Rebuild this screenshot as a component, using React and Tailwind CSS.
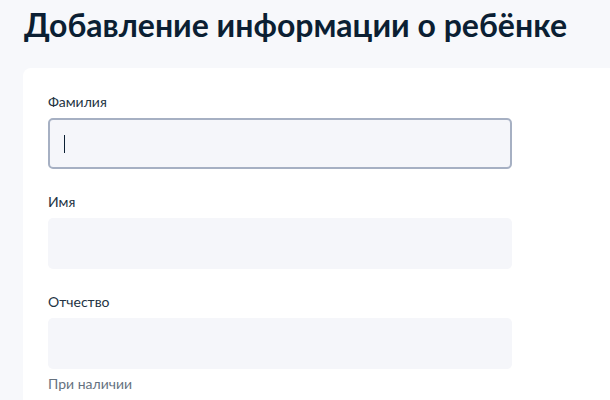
import { useState } from "react";

// Форма добавления ребёнка — три поля ФИО
const fields = [
  { id: "lastName", label: "Фамилия", focused: true },
  { id: "firstName", label: "Имя" },
  { id: "middleName", label: "Отчество", hint: "При наличии" },
];

export default function App() {
  const [values, setValues] = useState({ lastName: "", firstName: "", middleName: "" });

  return (
    <div
      className="min-h-[400px] overflow-hidden bg-[#f7f8fb] pl-[23px] pt-[5px]"
      style={{ fontFamily: "Lato, 'Noto Sans', sans-serif" }}
    >
      <h1 className="pl-px text-[32px] font-bold leading-[40px] text-[#0b1f33]">
        Добавление информации о ребёнке
      </h1>

      <div className="mt-[23px] w-[640px] rounded-tl-lg bg-white pl-[25px] pt-[25px] pb-6">
        {fields.map((f, i) => (
          <div key={f.id} className={i === 0 ? "" : "mt-[24px]"}>
            <label
              htmlFor={f.id}
              className="block text-[14px] leading-[18px] text-[#233343]"
            >
              {f.label}
            </label>
            <div
              className={
                "mt-[7px] flex h-[51px] w-[464px] items-center rounded-[5px] bg-[#f5f6fa] px-[14px] " +
                (f.focused ? "border-2 border-[#a6b0c3]" : "border-2 border-transparent")
              }
            >
              {f.focused && <span className="h-[18px] w-px bg-[#0b1f33]" />}
              <input
                id={f.id}
                value={values[f.id]}
                onChange={(e) => setValues({ ...values, [f.id]: e.target.value })}
                className="flex-1 bg-transparent text-[15px] outline-none"
              />
            </div>
            {f.hint && (
              <p className="mt-[6px] text-[14px] leading-[18px] text-[#66727f]">{f.hint}</p>
            )}
          </div>
        ))}
      </div>
    </div>
  );
}
